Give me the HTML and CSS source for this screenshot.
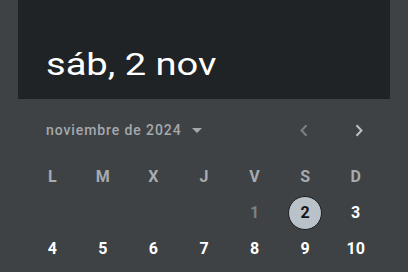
FILE: index.html
```html
<!DOCTYPE html>
<html lang="es">
<head>
<meta charset="utf-8">
<link rel="stylesheet" href="styles.css">
</head>
<body>
<div class="picker">
  <div class="header"><span class="title">sáb, 2 nov</span></div>
  <div class="month-row">
    <div class="month-label">noviembre de 2024
      <svg class="caret" width="10" height="5" viewBox="0 0 10 5"><path d="M0 0h10L5 5z" fill="currentColor"/></svg>
    </div>
    <div class="nav">
      <span class="nav-btn prev"><svg width="8" height="13" viewBox="0 0 8 13"><path d="M6.5 1.2L1.5 6.5l5 5.3" fill="none" stroke="currentColor" stroke-width="2"/></svg></span>
      <span class="nav-btn next"><svg width="8" height="13" viewBox="0 0 8 13"><path d="M1.5 1.2l5 5.3-5 5.3" fill="none" stroke="currentColor" stroke-width="2"/></svg></span>
    </div>
  </div>
  <div class="grid">
    <div class="wd">L</div><div class="wd">M</div><div class="wd">X</div><div class="wd">J</div><div class="wd">V</div><div class="wd">S</div><div class="wd">D</div>
    <div class="day"></div><div class="day"></div><div class="day"></div><div class="day"></div>
    <div class="day muted">1</div>
    <div class="day"><span class="sel">2</span></div>
    <div class="day">3</div>
    <div class="day">4</div><div class="day">5</div><div class="day">6</div><div class="day">7</div><div class="day">8</div><div class="day">9</div><div class="day">10</div>
  </div>
</div>
</body>
</html>
```
FILE: styles.css
```css
html, body {
  margin: 0;
  padding: 0;
  background: #3e4245;
  font-family: Roboto, "Liberation Sans", sans-serif;
  overflow: hidden;
}
.picker {
  width: 408px;
  height: 272px;
}
.header {
  margin: 0 18px;
  height: 99px;
  box-sizing: border-box;
  background: #202326;
  padding: 48px 0 0 28px;
}
.title {
  display: inline-block;
  font-size: 32px;
  line-height: 32px;
  color: #ffffff;
  transform: scaleX(1.19);
  transform-origin: left center;
}
.month-row {
  display: flex;
  justify-content: space-between;
  align-items: center;
  height: 20px;
  margin-top: 21px;
  padding: 0 29.5px 0 46px;
}
.month-label {
  display: flex;
  align-items: center;
  font-size: 14px;
  font-weight: 500;
  line-height: 20px;
  letter-spacing: 0.9px;
  color: #a5a9ac;
}
.caret {
  margin-left: 10px;
  margin-top: 1px;
  color: #a5a9ac;
}
.nav {
  display: flex;
  gap: 15px;
}
.nav-btn {
  width: 40px;
  height: 20px;
  display: flex;
  align-items: center;
  justify-content: center;
}
.prev { color: #7c8084; }
.next { color: #bcc0c3; }
.grid {
  margin: 18.5px 0 0 27px;
  width: 354px;
  display: grid;
  grid-template-columns: repeat(7, 1fr);
  grid-auto-rows: 36px;
}
.wd, .day {
  display: flex;
  align-items: center;
  justify-content: center;
  font-size: 16px;
  font-weight: 700;
  line-height: 36px;
}
.wd { color: #a7abae; }
.day { color: #ffffff; }
.day.muted { color: #7b7f83; }
.sel {
  width: 32px;
  height: 32px;
  border: 1px solid #1c1e20;
  border-radius: 50%;
  background: #b9c2c8;
  color: #131517;
  display: flex;
  align-items: center;
  justify-content: center;
  line-height: 1;
}
```
